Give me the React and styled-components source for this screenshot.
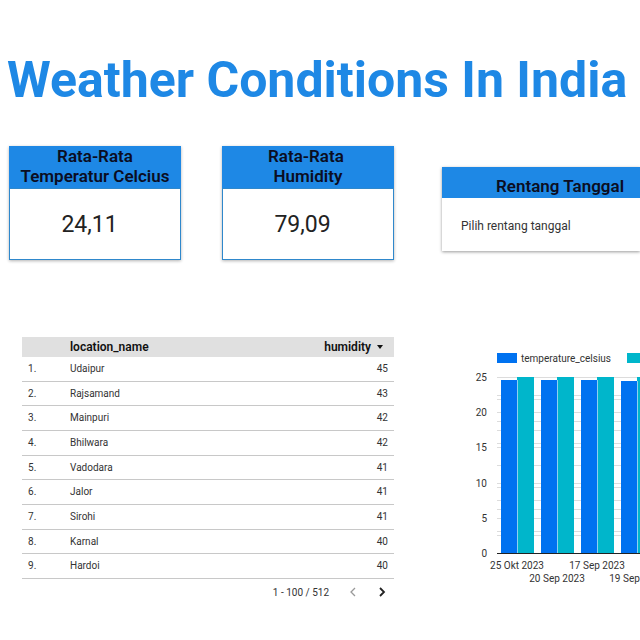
import React from "react";
import styled, { createGlobalStyle } from "styled-components";

const GlobalStyle = createGlobalStyle`
  *, *::before, *::after { box-sizing: border-box; }
  body {
    margin: 0;
    background: #fff;
    color: #222;
    font-family: Roboto, "Liberation Sans", sans-serif;
    overflow-x: hidden;
  }
`;

const Page = styled.main`
  padding: 50px 0 40px 7px;
  overflow: hidden;
`;

const Title = styled.h1`
  margin: 0 0 36px;
  color: #1e88e5;
  font-size: 50px;
  line-height: 60px;
  font-weight: 700;
  white-space: nowrap;
`;

const Columns = styled.div`
  display: grid;
  grid-template-columns: minmax(0, 385fr) minmax(0, 198fr);
  column-gap: 48px;
  align-items: ${(p) => p.$align || "start"};
  margin-bottom: ${(p) => p.$space || 0}px;
  padding-left: 2px;
`;

const Scores = styled.div`
  display: grid;
  grid-template-columns: 1fr 1fr;
  column-gap: 41px;
`;

const ScoreCard = styled.section`
  box-shadow: 0 1px 3px rgba(0, 0, 0, 0.3);
`;

const ScoreHead = styled.h2`
  margin: 0;
  padding: 0 0 2px;
  background: #1e88e5;
  color: #0b0d22;
  font-size: 17px;
  line-height: 20px;
  font-weight: 600;
  text-align: center;
  white-space: pre;
`;

const ScoreValue = styled.p`
  margin: 0;
  padding: 0 11px 0 0;
  height: 72px;
  border: 1px solid #2f88cc;
  background: #fff;
  font-size: 23px;
  line-height: 72px;
  text-align: center;
`;

const DateCard = styled.section`
  margin-bottom: 9px;
  box-shadow: 0 1px 3px rgba(0, 0, 0, 0.4);
`;

const DateHead = styled.h2`
  margin: 0;
  padding: 8px 0 0 54px;
  height: 31px;
  background: #1e88e5;
  color: #0b0d22;
  font-size: 17px;
  line-height: 22px;
  font-weight: 600;
  white-space: nowrap;
`;

const DateButton = styled.button`
  display: block;
  width: 100%;
  height: 53px;
  padding: 2px 0 0 19px;
  border: 0;
  background: #fff;
  color: #333;
  font: 400 12px/16px Roboto, "Liberation Sans", sans-serif;
  text-align: left;
  white-space: nowrap;
`;

const TablePanel = styled.section`
  padding-left: 13px;
`;

const Table = styled.table`
  width: 100%;
  border-collapse: separate;
  border-spacing: 0;
  table-layout: fixed;
  font-size: 10px;
  line-height: 12px;
  color: #333;
`;

const HeadCell = styled.th`
  width: ${(p) => p.$width || "auto"};
  height: 20px;
  padding: 0 ${(p) => (p.$right ? 11 : 0)}px 0 0;
  background: #e0e0e0;
  color: #111;
  font-size: 12px;
  font-weight: 600;
  text-align: ${(p) => (p.$right ? "right" : "left")};
`;

const SortButton = styled.button`
  display: inline-flex;
  align-items: center;
  gap: 6px;
  padding: 0;
  border: 0;
  background: none;
  color: inherit;
  font: inherit;
`;

const Row = styled.tr`
  height: 25px;
  &:nth-child(3n + 2) { height: 24px; }
`;

const Cell = styled.td`
  padding: 0 6px 0 ${(p) => (p.$index ? 6 : 0)}px;
  border-bottom: 1px solid #c8c8c8;
  text-align: ${(p) => (p.$right ? "right" : "left")};
`;

const Pager = styled.nav`
  display: flex;
  justify-content: flex-end;
  align-items: center;
  height: 26px;
  padding-right: 5px;
  color: #333;
  font-size: 10px;
`;

const PagerButton = styled.button`
  display: flex;
  justify-content: center;
  width: 14px;
  margin-left: 16px;
  padding: 0;
  border: 0;
  background: none;
  color: ${(p) => (p.disabled ? "#999" : "#222")};
`;

const ChartPanel = styled.figure`
  margin: 0;
  padding-top: 14px;
  overflow: hidden;
`;

const Legend = styled.figcaption`
  display: flex;
  align-items: center;
  gap: 4px;
  height: 14px;
  margin-left: 55px;
  font-size: 10px;
  color: #333;
`;

const Swatch = styled.span`
  flex: none;
  width: 20px;
  height: 10px;
  background: ${(p) => p.$color};
`;

const SeriesName = styled.span`
  margin-right: 12px;
`;

const Plot = styled.svg`
  display: block;
  overflow: visible;
`;

const AxisText = styled.text`
  font-size: 10px;
  fill: #333;
`;

const rows = [
  ["Udaipur", 45],
  ["Rajsamand", 43],
  ["Mainpuri", 42],
  ["Bhilwara", 42],
  ["Vadodara", 41],
  ["Jalor", 41],
  ["Sirohi", 41],
  ["Karnal", 40],
  ["Hardoi", 40],
];

const bars = [
  { date: "25 Okt 2023", temp: 173 },
  { date: "20 Sep 2023", temp: 173 },
  { date: "17 Sep 2023", temp: 173 },
  { date: "19 Sep 2023", temp: 172 },
];

const BLUE = "#0072f0";
const TEAL = "#00b6cb";
const BASE = 188;
const HEIGHT = 176;

const gridLines = [
  ...Array.from({ length: 10 }, (_, i) => Math.round(BASE - ((i + 1) * HEIGHT) / 10)),
  ...Array.from({ length: 7 }, (_, i) => BASE - (i + 1) * 22),
];

function Chart() {
  return (
    <Plot width="240" height="230" role="img" aria-label="temperature_celsius">
      {gridLines.map((y, i) => (
        <rect key={i} x="55" y={y} width="185" height="1" fill="#dcdcdc" />
      ))}
      {[0, 5, 10, 15, 20, 25].map((v) => (
        <AxisText key={v} x="45" y={Math.round(BASE - (v * HEIGHT) / 25) + 4} textAnchor="end">
          {v}
        </AxisText>
      ))}
      {bars.map((b, i) => (
        <g key={b.date}>
          <rect x={59 + i * 40} y={BASE - b.temp} width="16" height={b.temp} fill={BLUE} />
          <rect x={75 + i * 40} y={BASE - HEIGHT} width="17" height={HEIGHT} fill={TEAL} />
          <rect x={75 + i * 40} y={BASE - b.temp} width="1" height={b.temp} fill="#8ed0f0" />
          <AxisText x={75 + i * 40} y={i % 2 ? 217 : 204} textAnchor="middle">
            {b.date}
          </AxisText>
        </g>
      ))}
      <rect x="55" y={BASE} width="185" height="1" fill="#222" />
    </Plot>
  );
}

export default function App() {
  return (
    <>
      <GlobalStyle />
      <Page>
        <Title>Weather Conditions In India</Title>
        <Columns $align="end" $space={77}>
          <Scores>
            <ScoreCard>
              <ScoreHead>{"Rata-Rata\nTemperatur Celcius"}</ScoreHead>
              <ScoreValue>24,11</ScoreValue>
            </ScoreCard>
            <ScoreCard>
              <ScoreHead>{"Rata-Rata \nHumidity"}</ScoreHead>
              <ScoreValue>79,09</ScoreValue>
            </ScoreCard>
          </Scores>
          <DateCard>
            <DateHead>Rentang Tanggal</DateHead>
            <DateButton type="button">Pilih rentang tanggal</DateButton>
          </DateCard>
        </Columns>
        <Columns>
          <TablePanel>
            <Table>
              <thead>
                <tr>
                  <HeadCell $width="48px" aria-label="No." />
                  <HeadCell scope="col">location_name</HeadCell>
                  <HeadCell scope="col" $right aria-sort="descending">
                    <SortButton type="button">
                      humidity
                      <svg width="6" height="4" viewBox="0 0 6 4" aria-hidden="true">
                        <path d="M0 0h6L3 4z" fill="currentColor" />
                      </svg>
                    </SortButton>
                  </HeadCell>
                </tr>
              </thead>
              <tbody>
                {rows.map(([name, value], i) => (
                  <Row key={name}>
                    <Cell $index>{i + 1}.</Cell>
                    <Cell>{name}</Cell>
                    <Cell $right>{value}</Cell>
                  </Row>
                ))}
              </tbody>
            </Table>
            <Pager aria-label="Pagination">
              <span>1 - 100 / 512</span>
              <PagerButton type="button" disabled aria-label="Previous page">
                <svg width="7" height="10" viewBox="0 0 7 10" fill="none" stroke="currentColor" strokeWidth="1.3">
                  <path d="M6 1L2 5l4 4" />
                </svg>
              </PagerButton>
              <PagerButton type="button" aria-label="Next page">
                <svg width="7" height="10" viewBox="0 0 7 10" fill="none" stroke="currentColor" strokeWidth="1.8">
                  <path d="M1 1l4 4-4 4" />
                </svg>
              </PagerButton>
            </Pager>
          </TablePanel>
          <ChartPanel>
            <Legend>
              <Swatch $color={BLUE} />
              <SeriesName>temperature_celsius</SeriesName>
              <Swatch $color={TEAL} />
            </Legend>
            <Chart />
          </ChartPanel>
        </Columns>
      </Page>
    </>
  );
}
